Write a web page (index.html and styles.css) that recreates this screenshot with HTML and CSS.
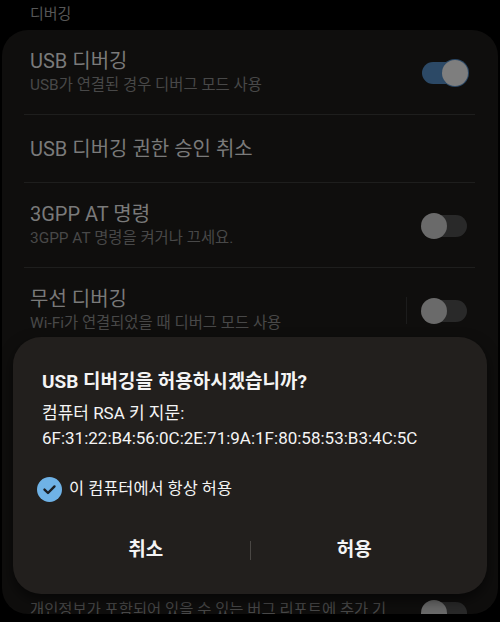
FILE: index.html
```html
<!DOCTYPE html>
<html lang="ko">
<head>
    <meta charset="UTF-8">
    <meta name="viewport" content="width=device-width, initial-scale=1.0">
    <title>개발자 옵션</title>
    <link rel="stylesheet" href="styles.css">
</head>
<body>
    <div class="screen">
        <div class="category">디버깅</div>

        <div class="card">
            <div class="row">
                <div class="text">
                    <div class="title">USB 디버깅</div>
                    <div class="summary">USB가 연결된 경우 디버그 모드 사용</div>
                </div>
                <span class="switch on"><span class="thumb"></span></span>
            </div>
            <div class="divider"></div>

            <div class="row single">
                <div class="text">
                    <div class="title">USB 디버깅 권한 승인 취소</div>
                </div>
            </div>
            <div class="divider"></div>

            <div class="row">
                <div class="text">
                    <div class="title">3GPP AT 명령</div>
                    <div class="summary">3GPP AT 명령을 켜거나 끄세요.</div>
                </div>
                <span class="switch"><span class="thumb"></span></span>
            </div>
            <div class="divider"></div>

            <div class="row">
                <div class="text">
                    <div class="title">무선 디버깅</div>
                    <div class="summary">Wi-Fi가 연결되었을 때 디버그 모드 사용</div>
                </div>
                <span class="vline"></span>
                <span class="switch"><span class="thumb"></span></span>
            </div>
            <div class="divider"></div>

            <!-- rows hidden behind the dialog -->
            <div class="covered"></div>

            <div class="row last">
                <div class="text">
                    <div class="summary">개인정보가 포함되어 있을 수 있는 버그 리포트에 추가 기</div>
                </div>
                <span class="switch"><span class="thumb"></span></span>
            </div>
        </div>

        <div class="dialog">
            <h2 class="dialog-title">USB 디버깅을 허용하시겠습니까?</h2>
            <p class="dialog-body">컴퓨터 RSA 키 지문:<br>6F:31:22:B4:56:0C:2E:71:9A:1F:80:58:53:B3:4C:5C</p>

            <label class="check">
                <svg class="check-icon" width="25" height="25" viewBox="0 0 25 25">
                    <circle cx="12.5" cy="12.5" r="12.5" fill="#6fb2e6"/>
                    <path d="M7.5 12.6 L11 16 L17.5 9.4" fill="none" stroke="#1b1f24" stroke-width="2.4" stroke-linecap="round" stroke-linejoin="round"/>
                </svg>
                <span>이 컴퓨터에서 항상 허용</span>
            </label>

            <div class="buttons">
                <button class="btn">취소</button>
                <span class="btn-sep"></span>
                <button class="btn">허용</button>
            </div>
        </div>
    </div>
</body>
</html>
```

FILE: styles.css
```css
body {
    margin: 0;
    background-color: #000;
    font-family: Roboto, "Noto Sans CJK KR", sans-serif;
}
.screen {
    position: relative;
    width: 500px;
    height: 622px;
    overflow: hidden;
}
.category {
    height: 30px;
    padding-left: 30px;
    font-size: 15px;
    line-height: 28px;
    color: #575757;
}
.card {
    margin: 0 2px;
    height: 584px;
    overflow: hidden;
    background-color: #0f0e0d;
    border-radius: 26px;
}
.row {
    display: flex;
    align-items: center;
    padding: 19px 31px 18px 28px;
}
.row.single {
    padding: 22px 31px 21px 28px;
}
.row.last {
    align-items: flex-start;
    padding-top: 0;
}
.text {
    flex: 1;
    min-width: 0;
}
.title {
    font-size: 20px;
    line-height: 24px;
    color: #7a7a7a;
}
.summary {
    margin-top: 1px;
    font-size: 15.4px;
    line-height: 22px;
    color: #484848;
    white-space: nowrap;
}
.row.last .summary {
    margin-top: 0;
    overflow: hidden;
}
.divider {
    height: 1px;
    margin: 0 23px 0 22px;
    background-color: #1e1e1d;
}
.covered {
    height: 246px;
}
.vline {
    width: 1px;
    height: 27px;
    margin-right: 15px;
    background-color: #1c1c1c;
}
.switch {
    position: relative;
    flex: none;
    width: 45px;
    height: 22px;
    border-radius: 11px;
    background-color: #292929;
}
.row.last .switch {
    margin-top: 3px;
}
.switch .thumb {
    position: absolute;
    left: -1px;
    top: -2px;
    width: 26px;
    height: 26px;
    border-radius: 50%;
    background-color: #6a6a6a;
}
.switch.on {
    background-color: #2c4966;
}
.switch.on .thumb {
    left: auto;
    right: -1px;
    background-color: #7e7e7e;
    box-shadow: 0 0 0 1px #2c4966;
}
.dialog {
    position: absolute;
    left: 13px;
    top: 337px;
    width: 474px;
    box-sizing: border-box;
    padding: 31px 29px 18px;
    background-color: #221f1d;
    border-radius: 28px;
    color: #f4f4f4;
    box-shadow: 0 6px 14px rgba(0, 0, 0, 0.55);
}
.dialog-title {
    margin: 0;
    font-size: 19px;
    font-weight: bold;
    line-height: 28px;
}
.dialog-body {
    margin: 5px 0 0;
    font-size: 17px;
    line-height: 25px;
}
.check {
    display: flex;
    align-items: center;
    gap: 7px;
    margin-top: 25px;
    margin-left: -5px;
    font-size: 16.4px;
    line-height: 26px;
}
.check-icon {
    display: block;
}
.buttons {
    display: flex;
    align-items: center;
    margin-top: 22px;
    height: 52px;
}
.btn {
    flex: 1;
    padding: 0;
    border: none;
    background: none;
    color: #f4f4f4;
    font-family: Roboto, "Noto Sans CJK KR", sans-serif;
    font-size: 19px;
    font-weight: bold;
    line-height: 52px;
}
.btn-sep {
    width: 1px;
    height: 19px;
    background-color: #4a4744;
}
```
